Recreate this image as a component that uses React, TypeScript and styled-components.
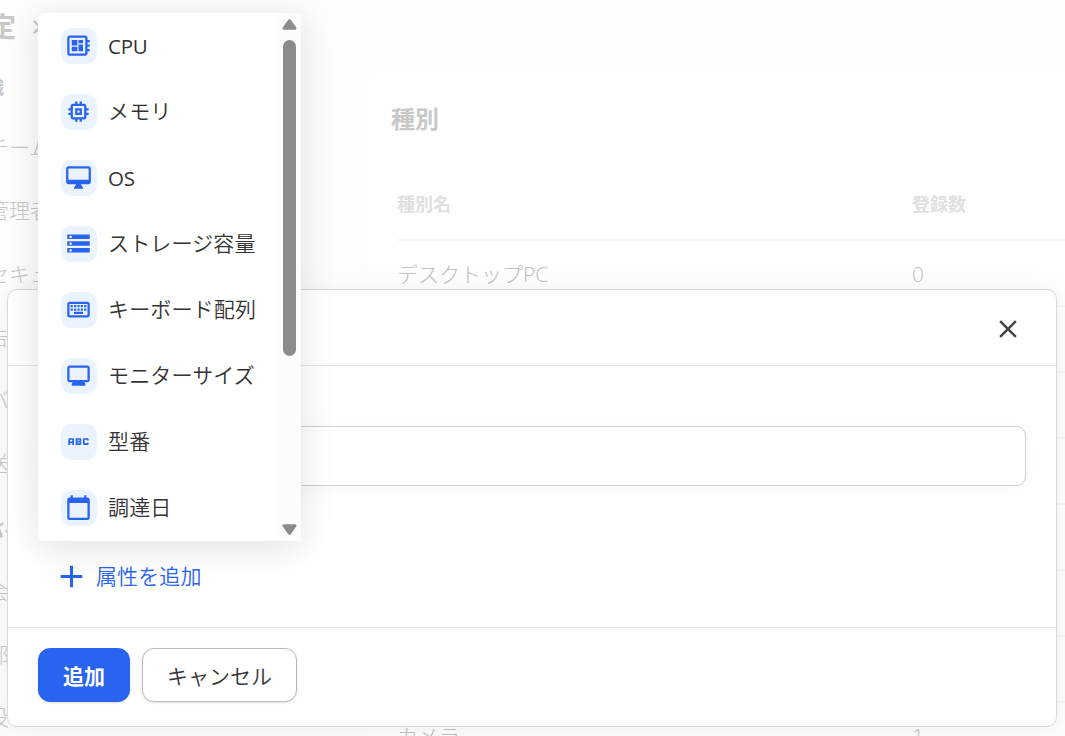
import React from 'react';
import styled, { createGlobalStyle } from 'styled-components';
import {
  MdOutlineDeveloperBoard, MdMemory, MdOutlineDesktopMac, MdStorage, MdOutlineKeyboard,
  MdAbc, MdCalendarToday, MdAdd, MdClose, MdOutlineMonitor, MdChevronRight,
} from 'react-icons/md';

const GlobalStyle = createGlobalStyle`
  * { box-sizing: border-box; }
  html, body { margin: 0; height: 736px; overflow: hidden; background: #fdfdfd; }
  body {
    font-family: "Open Sans", "Noto Sans CJK JP", sans-serif;
    font-size: 21px;
    font-weight: 350;
    line-height: 32px;
    color: #333;
  }
`;

const Screen = styled.div`
  position: relative;
  width: 1065px;
  height: 736px;
  overflow: hidden;
`;
const Backdrop = styled.div`
  display: flex;
  height: 100%;
`;
const Sidebar = styled.aside`
  width: 366px;
  flex: none;
  color: #c8c8c8;
`;
const Breadcrumb = styled.div`
  display: flex;
  align-items: center;
  height: 54px;
  font-size: 27px;
  font-weight: 700;
  margin-left: -11px;
  gap: 7px;
`;
const NavLabel = styled.div<{ $height: number }>`
  height: ${p => p.$height}px;
  line-height: ${p => p.$height}px;
  padding-top: 2px;
  margin-left: -32px;
  font-size: 18px;
  font-weight: 700;
`;
const NavItem = styled.div`
  height: 63.3px;
  line-height: 60px;
  margin-left: -12px;
  font-weight: 300;
`;
const Content = styled.main`
  flex: 1;
  margin-top: 71px;
  background: #fefefe;
  border-top-left-radius: 10px;
  border-left: 1px solid #fafafa;
  color: #c8c8c8;
`;
const Heading = styled.h1`
  margin: 0;
  height: 96px;
  line-height: 95px;
  padding-left: 24px;
  font-size: 24px;
`;
const Row = styled.div<{ $head?: boolean }>`
  display: grid;
  grid-template-columns: 515px 1fr;
  align-items: center;
  margin-left: 30px;
  padding-top: 2px;
  height: ${p => (p.$head ? 74 : 66)}px;
  border-bottom: 2px solid #f7f7f7;
  font-size: ${p => (p.$head ? 18 : 21)}px;
  font-weight: ${p => (p.$head ? 700 : 300)};
  color: ${p => (p.$head ? '#e0e0e0' : '#c0c0c0')};
`;
const Dialog = styled.section`
  position: absolute;
  left: 7px;
  top: 289px;
  width: 1050px;
  height: 438px;
  display: flex;
  flex-direction: column;
  background: #fff;
  border: 1px solid #d9d9d9;
  border-radius: 10px;
  box-shadow: 0 4px 32px rgba(0, 0, 0, 0.06);
`;
const DialogHeader = styled.header`
  height: 76px;
  flex: none;
  display: flex;
  align-items: center;
  justify-content: flex-end;
  padding: 3px 33px 0 0;
  border-bottom: 1px solid #e5e5e5;
  color: #444;
`;
const DialogBody = styled.div`
  flex: 1;
  padding: 60px 30px 0;
`;
const TextField = styled.input`
  display: block;
  width: 100%;
  height: 60px;
  border: 1px solid #d0d0d3;
  border-radius: 9px;
  background: #fff;
  box-shadow: 0 3px 24px rgba(0, 0, 0, 0.03);
`;
const AddAttribute = styled.button`
  display: flex;
  align-items: center;
  gap: 6px;
  margin: 74px 0 0 15px;
  padding: 0;
  height: 32px;
  border: 0;
  background: none;
  color: #2864f0;
  font: inherit;
  letter-spacing: 0.1px;
`;
const DialogFooter = styled.footer`
  height: 99px;
  flex: none;
  display: flex;
  gap: 12px;
  padding: 20px 30px;
  border-top: 1px solid #e5e5e5;
`;
const Button = styled.button<{ $primary?: boolean }>`
  width: ${p => (p.$primary ? 92 : 155)}px;
  height: 54px;
  padding: ${p => (p.$primary ? '1px 0 0' : '2px 0 0')};
  border: 1px solid ${p => (p.$primary ? '#2864f0' : '#b8b8b8')};
  border-radius: 12px;
  background: ${p => (p.$primary ? '#2864f0' : '#fff')};
  color: ${p => (p.$primary ? '#fff' : '#333')};
  font: inherit;
  font-weight: ${p => (p.$primary ? 700 : 350)};
  box-shadow: 0 1px 3px rgba(0, 0, 0, 0.12);
`;
const Menu = styled.div`
  position: absolute;
  left: 38px;
  top: 13px;
  width: 263px;
  height: 528px;
  display: flex;
  background: #fff;
  border-radius: 6px 0 0 6px;
  box-shadow: 0 6px 34px rgba(20, 15, 60, 0.13);
`;
const MenuList = styled.ul`
  flex: 1;
  margin: 0;
  padding: 0;
  list-style: none;
`;
const MenuItem = styled.li`
  display: flex;
  align-items: center;
  gap: 11px;
  height: 66px;
  padding-left: 23px;
`;
const ItemLabel = styled.span<{ $latin?: boolean }>`
  font-size: ${p => (p.$latin ? 20.5 : 21)}px;
  font-weight: ${p => (p.$latin ? 400 : 350)};
  letter-spacing: ${p => (p.$latin ? -0.2 : 0.15)}px;
  padding-bottom: ${p => (p.$latin ? 0 : 2)}px;
`;
const IconTile = styled.span`
  display: flex;
  padding: 4px 0 0 4px;
  width: 36px;
  height: 36px;
  border-radius: 11px;
  background: #ebf3ff;
  color: #2864f0;
`;
const Scrollbar = styled.div`
  display: flex;
  flex-direction: column;
  align-items: center;
  justify-content: space-between;
  width: 23px;
  padding: 6px 0;
  background: #fcfcfc;
`;
const Thumb = styled.div`
  width: 13px;
  height: 316px;
  margin: 10px 0 auto;
  border-radius: 7px;
  background: #8b8b8b;
`;

const items = [
  { label: 'CPU', icon: MdOutlineDeveloperBoard, latin: true },
  { label: 'メモリ', icon: MdMemory },
  { label: 'OS', icon: MdOutlineDesktopMac, latin: true },
  { label: 'ストレージ容量', icon: MdStorage },
  { label: 'キーボード配列', icon: MdOutlineKeyboard },
  { label: 'モニターサイズ', icon: MdOutlineMonitor },
  { label: '型番', icon: MdAbc },
  { label: '調達日', icon: MdCalendarToday },
];

const Arrow = ({ down }: { down?: boolean }) => (
  <svg width="15" height="11" viewBox="0 0 15 11" fill="#8b8b8b" stroke="#8b8b8b" strokeWidth="3" strokeLinejoin="round">
    <path d={down ? 'M2 1.7h11L7.5 9.3z' : 'M2 9.3h11L7.5 1.7z'} />
  </svg>
);

export default function App() {
  return (
    <Screen>
      <GlobalStyle />
      <Backdrop>
        <Sidebar>
          <Breadcrumb>定<MdChevronRight size={28} /></Breadcrumb>
          <NavLabel $height={63}>組織</NavLabel>
          {['チーム', '管理者', 'セキュリティ', '告知', 'バックアップ', '送信'].map(t => <NavItem key={t}>{t}</NavItem>)}
          <NavLabel $height={64}>デバイス</NavLabel>
          {['会社', '部署', '役職'].map(t => <NavItem key={t}>{t}</NavItem>)}
        </Sidebar>
        <Content>
          <Heading>種別</Heading>
          <Row $head><span>種別名</span><span>登録数</span></Row>
          <Row><span>デスクトップPC</span><span>0</span></Row>
          {Array.from({ length: 6 }, (_, i) => <Row key={i} />)}
          <Row><span>カメラ</span><span>1</span></Row>
        </Content>
      </Backdrop>
      <Dialog>
        <DialogHeader><MdClose size={30} /></DialogHeader>
        <DialogBody>
          <TextField />
          <AddAttribute><MdAdd size={37} />属性を追加</AddAttribute>
        </DialogBody>
        <DialogFooter>
          <Button $primary>追加</Button>
          <Button>キャンセル</Button>
        </DialogFooter>
      </Dialog>
      <Menu>
        <MenuList>
          {items.map(({ label, icon: Icon, latin }) => (
            <MenuItem key={label}>
              <IconTile><Icon size={27} /></IconTile>
              <ItemLabel $latin={latin}>{label}</ItemLabel>
            </MenuItem>
          ))}
        </MenuList>
        <Scrollbar><Arrow /><Thumb /><Arrow down /></Scrollbar>
      </Menu>
    </Screen>
  );
}
